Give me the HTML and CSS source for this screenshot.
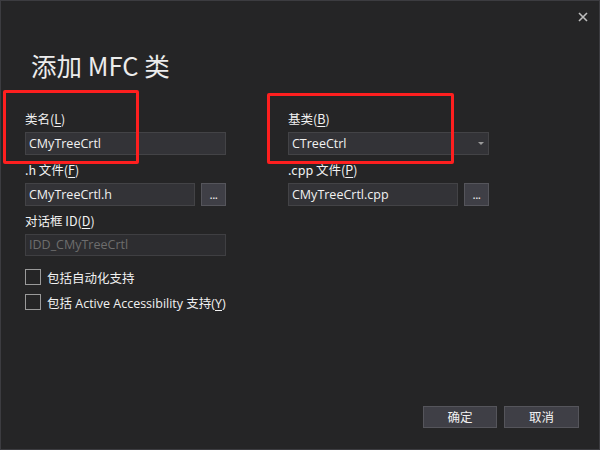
FILE: index.html
```html
<!DOCTYPE html>
<html lang="zh-CN">
<head>
<meta charset="utf-8">
<title>添加 MFC 类</title>
<link rel="stylesheet" href="styles.css">
</head>
<body>
<div class="window">
  <div class="titlebar">
    <svg class="close" width="10" height="10" viewBox="0 0 10 10"><path d="M1 1 L9 9 M9 1 L1 9" stroke="#bdbdbd" stroke-width="1.6" fill="none"/></svg>
  </div>
  <h1 class="title">添加 MFC 类</h1>
  <div class="form">
    <div class="col left">
      <div class="label">类名(<u>L</u>)</div>
      <div class="input wide">CMyTreeCrtl</div>
      <div class="label">.h 文件(<u>F</u>)</div>
      <div class="row">
        <div class="input narrow">CMyTreeCrtl.h</div>
        <div class="browse">...</div>
      </div>
      <div class="label">对话框 ID(<u>D</u>)</div>
      <div class="input wide disabled">IDD_CMyTreeCrtl</div>
      <div class="checks">
        <div class="check"><span class="box"></span><span>包括自动化支持</span></div>
        <div class="check"><span class="box"></span><span>包括 Active Accessibility 支持(<u>Y</u>)</span></div>
      </div>
    </div>
    <div class="col right">
      <div class="label">基类(<u>B</u>)</div>
      <div class="input wide combo"><span>CTreeCtrl</span><span class="arrow"></span></div>
      <div class="label">.cpp 文件(<u>P</u>)</div>
      <div class="row">
        <div class="input narrow">CMyTreeCrtl.cpp</div>
        <div class="browse">...</div>
      </div>
    </div>
  </div>
  <div class="footer">
    <div class="btn ok">确定</div>
    <div class="btn cancel">取消</div>
  </div>
  <div class="mark mark1"></div>
  <div class="mark mark2"></div>
</div>
</body>
</html>
```
FILE: styles.css
```css
html, body {
  margin: 0;
  padding: 0;
  background: #252526;
}
.window {
  position: relative;
  width: 600px;
  height: 450px;
  box-sizing: border-box;
  border: 1px solid #3c3c40;
  background: #252526;
  color: #f1f1f1;
  font-family: "Open Sans", "Noto Sans CJK SC", sans-serif;
  font-size: 13px;
  display: flex;
  flex-direction: column;
  overflow: hidden;
}
.titlebar {
  height: 32px;
  display: flex;
  justify-content: flex-end;
  align-items: center;
  padding-right: 11px;
}
.title {
  margin: 15px 0 22px 30px;
  font-family: "Noto Sans CJK SC", sans-serif;
  font-weight: normal;
  font-size: 25.5px;
  line-height: 34px;
  color: #ececec;
}
.form {
  display: flex;
  gap: 62px;
  padding-left: 24px;
  flex: 1;
}
.col {
  width: 201px;
  display: flex;
  flex-direction: column;
}
.label {
  line-height: 20px;
  margin: 5px 0 3px 0;
  font-family: "Noto Sans CJK SC", sans-serif;
  font-size: 12.5px;
  white-space: nowrap;
}
u {
  text-decoration: underline;
  text-underline-offset: 2px;
}
.input {
  height: 23px;
  box-sizing: border-box;
  background: #333337;
  border: 1px solid #434346;
  padding: 0 3px;
  line-height: 21px;
  font-size: 12.5px;
  white-space: nowrap;
  overflow: hidden;
}
.input.wide { width: 201px; }
.input.narrow { width: 170px; }
.input.disabled {
  background: #2d2d30;
  border-color: #3f3f42;
  color: #6d6d6d;
  height: 22px;
  line-height: 20px;
}
.combo {
  display: flex;
  justify-content: space-between;
  align-items: center;
  padding-right: 4px;
}
.arrow {
  width: 0;
  height: 0;
  border-left: 3px solid transparent;
  border-right: 3px solid transparent;
  border-top: 3px solid #9a9a9a;
}
.row {
  display: flex;
  gap: 6px;
}
.browse {
  width: 25px;
  height: 23px;
  box-sizing: border-box;
  background: #3f3f46;
  border: 1px solid #55555b;
  line-height: 22px;
  text-align: center;
  font-size: 12px;
  font-weight: normal;
  letter-spacing: -0.5px;
}
.checks {
  margin-top: 13px;
  display: flex;
  flex-direction: column;
  gap: 9px;
}
.check {
  display: flex;
  align-items: center;
  gap: 6px;
  height: 16px;
  font-size: 12.5px;
  white-space: nowrap;
}
.box {
  width: 16px;
  height: 16px;
  box-sizing: border-box;
  border: 1px solid #9a9a9a;
  flex: none;
}
.footer {
  display: flex;
  justify-content: flex-end;
  gap: 7px;
  padding: 0 20px 21px 0;
}
.btn {
  width: 74px;
  height: 22px;
  box-sizing: border-box;
  background: #3f3f46;
  border: 1px solid #55555b;
  text-align: center;
  line-height: 20px;
  font-family: "Noto Sans CJK SC", sans-serif;
  font-size: 12.5px;
}
.btn.cancel { width: 75px; }
.mark {
  position: absolute;
  box-sizing: border-box;
  border: 3px solid #fe1f1f;
  border-radius: 2px;
}
.mark1 {
  left: 2px;
  top: 89px;
  width: 136px;
  height: 74px;
}
.mark2 {
  left: 266px;
  top: 92px;
  width: 187px;
  height: 71px;
}
```
